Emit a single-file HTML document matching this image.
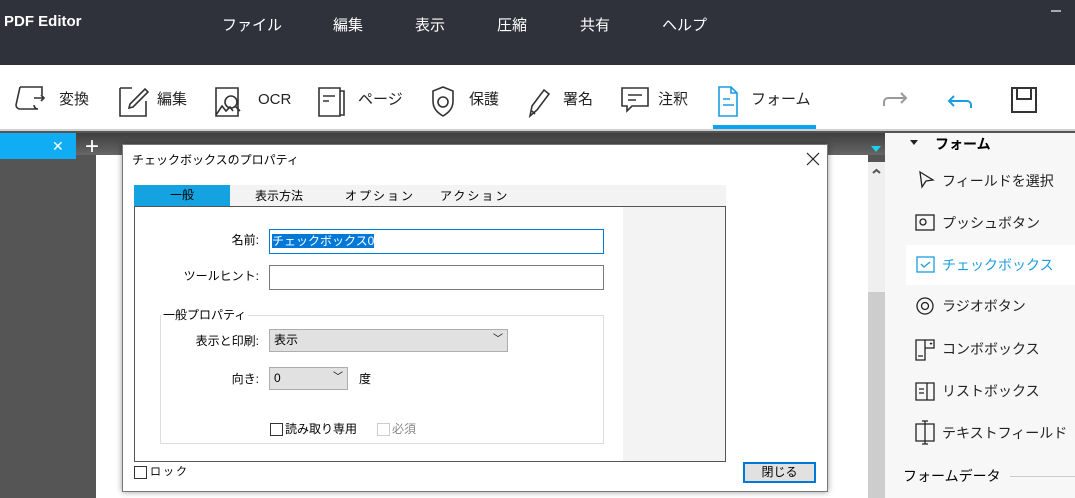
<!DOCTYPE html>
<html><head><meta charset="utf-8"><style>
*{margin:0;padding:0;box-sizing:border-box}
body{width:1075px;height:498px;overflow:hidden;position:relative;font-family:"Liberation Sans","Noto Sans CJK JP",sans-serif;background:#555}
.a{position:absolute}
.hdr{left:0;top:0;width:1075px;height:65px;background:#2f323b;color:#fff}
.menu{top:16px;font-size:15px;line-height:20px}
.tb{left:0;top:65px;width:1075px;height:66px;background:#fff;border-bottom:2px solid #d0d0d0}
.ti{top:90px;font-size:15px;line-height:20px;color:#222}
.dlg{left:122px;top:144px;width:706px;height:348px;background:#fff;border:1px solid #777;box-shadow:0 0 6px rgba(0,0,0,.4);font-size:12px;line-height:16px;color:#000}
.lbl{font-size:12px;text-align:right;width:120px}
.rp{left:885px;top:133px;width:190px;height:365px;background:#f7f7f7}
.ri{left:942px;font-size:14px;line-height:18px;color:#222}
</style></head><body>
<div class="a hdr">
<div class="a" style="left:4px;top:13px;font-weight:bold;font-size:15px;line-height:18px">PDF Editor</div>
<div class="a menu" style="left:222px">ファイル</div>
<div class="a menu" style="left:333px">編集</div>
<div class="a menu" style="left:415px">表示</div>
<div class="a menu" style="left:497px">圧縮</div>
<div class="a menu" style="left:580px">共有</div>
<div class="a menu" style="left:662px">ヘルプ</div>
<div class="a" style="left:1051px;top:10px;width:10px;height:2px;background:#aaa"></div>
</div>
<div class="a tb"></div>
<svg class="a" style="left:0;top:65px" width="1075" height="66" fill="none" stroke="#333" stroke-width="1.6">
<path d="M20 22h22v8M20 22l-4 18a4 4 0 0 0 4 4h18a4 4 0 0 1-4-4M34 33h10M41 30l3 3-3 3"/>
<path d="M120 23h12M120 23v28h26V36M133 42l-4 1 1-4 15-15 3 3z"/>
<path d="M216 23h22v28h-22zM216 50l6-9 4 5 4-4 3 4" /><circle cx="231" cy="37" r="6"/><path d="M235 41l5 5"/>
<path d="M319 23h21v28h-21zM340 26h4v24h-4M323 31h12M323 36h6"/>
<path d="M443 22l10 4v10c0 8-5 12-10 15-5-3-10-7-10-15V26z"/><circle cx="443" cy="37" r="5"/>
<path d="M530 51l2-10 12-16 5 4-12 16zM532 46l3 3"/>
<path d="M622 23h26v18h-16l-5 5v-5h-5zM628 30h14M628 35h8" />
<path stroke="#1a9de0" d="M719 22h12l6 6v23h-18zM731 22v6h6M723 34h7M723 40h11"/>
<path stroke="#999" stroke-width="2" d="M884 41v-4a4 4 0 0 1 4-4h18M901 28l5 5-5 5"/>
<path stroke="#1a9de0" stroke-width="2" d="M971 43v-3a4 4 0 0 0-4-4h-18M954 31l-5 5 5 5"/>
<path stroke-width="2" d="M1012 23h24v24h-24zM1017 23v11h14V23"/>
</svg>
<div class="a ti" style="left:59px">変換</div>
<div class="a ti" style="left:157px">編集</div>
<div class="a ti" style="left:258px">OCR</div>
<div class="a ti" style="left:358px">ページ</div>
<div class="a ti" style="left:469px">保護</div>
<div class="a ti" style="left:563px">署名</div>
<div class="a ti" style="left:658px">注釈</div>
<div class="a ti" style="left:751px">フォーム</div>
<div class="a" style="left:713px;top:125px;width:103px;height:4px;background:#0aa4f0"></div>
<div class="a" style="left:0;top:133px;width:885px;height:22px;background:linear-gradient(#3f3f3f,#666)"></div>
<div class="a" style="left:0;top:133px;width:76px;height:26px;background:#10adf5;color:#fff;font-size:14px;line-height:26px;padding-left:52px">✕</div>
<div class="a" style="left:85px;top:133px;color:#fff;font-size:24px;line-height:28px">+</div>
<div class="a" style="left:871px;top:146px;border:5px solid transparent;border-top:6px solid #19d4f0;border-bottom:0"></div>
<div class="a" style="left:96px;top:155px;width:772px;height:343px;background:#fff"></div>
<div class="a" style="left:868px;top:162px;width:17px;height:336px;background:#cdcdcd"></div>
<div class="a" style="left:868px;top:162px;width:17px;height:130px;background:#efefef"></div>
<svg class="a" style="left:868px;top:162px" width="17" height="20"><path d="M5 11l3.5-3 3.5 3" fill="none" stroke="#555" stroke-width="2"/></svg>
<div class="a rp"></div>
<div class="a" style="left:910px;top:140px;border:4px solid transparent;border-top:5px solid #222;border-bottom:0"></div>
<div class="a" style="left:935px;top:135px;font-size:14px;line-height:18px;font-weight:bold">フォーム</div>
<div class="a" style="left:906px;top:245px;width:169px;height:40px;background:#fff"></div>
<svg class="a" style="left:880px;top:160px" width="60" height="300" fill="none" stroke="#222" stroke-width="1.3">
<path d="M40 12l13 8-7 1-4 6z"/>
<rect x="36" y="55" width="18" height="15"/><circle cx="43" cy="62" r="3"/>
<rect x="37" y="97" width="17" height="15" stroke="#1a9de0"/><path stroke="#1a9de0" d="M41 104l3 3 6-5"/>
<circle cx="45" cy="146" r="8"/><circle cx="45" cy="146" r="3.5"/>
<path d="M36 180h9v20h-9zM45 180h9v8h-9M38 196h5M50 183l1 1 1-1"/>
<path d="M36 223h18v17H36zM47 223v17M39 229h5M39 233h5"/>
<path d="M36 264h18v17H36zM45 261v23M42 261h6M42 284h6"/>
</svg>
<div class="a ri" style="top:172px">フィールドを選択</div>
<div class="a ri" style="top:214px">プッシュボタン</div>
<div class="a ri" style="top:256px;color:#1a9de0">チェックボックス</div>
<div class="a ri" style="top:297px">ラジオボタン</div>
<div class="a ri" style="top:340px">コンボボックス</div>
<div class="a ri" style="top:382px">リストボックス</div>
<div class="a ri" style="top:424px">テキストフィールド</div>
<div class="a" style="left:903px;top:467px;font-size:14px;line-height:18px">フォームデータ</div>
<div class="a" style="left:1010px;top:476px;width:65px;height:1px;background:#ccc"></div>

<div class="a dlg">
<div class="a" style="left:9px;top:7px">チェックボックスのプロパティ</div>
<svg class="a" style="left:683px;top:7px" width="14" height="14"><path d="M1 1l12 12M13 1L1 13" stroke="#222" stroke-width="1.2"/></svg>
<div class="a" style="left:11px;top:40px;width:592px;height:22px;background:#f3f3f3"></div>
<div class="a" style="left:11px;top:40px;width:96px;height:22px;background:#14a3e0;text-align:center;line-height:20px">一般</div>
<div class="a" style="left:132px;top:43px">表示方法</div>
<div class="a" style="left:222px;top:43px;letter-spacing:2px">オプション</div>
<div class="a" style="left:317px;top:43px;letter-spacing:2px">アクション</div>
<div class="a" style="left:11px;top:61px;width:592px;height:256px;border:1px solid #555;background:#f3f3f3"></div>
<div class="a" style="left:12px;top:62px;width:488px;height:254px;background:#fff"></div>
<div class="a lbl" style="left:16px;top:87px">名前:</div>
<div class="a" style="left:146px;top:84px;width:335px;height:25px;border:1px solid #0078d7;padding:3px 2px"><span style="background:#0078d7;color:#fff">チェックボックス0</span></div>
<div class="a lbl" style="left:16px;top:123px">ツールヒント:</div>
<div class="a" style="left:146px;top:120px;width:335px;height:25px;border:1px solid #7a7a7a"></div>
<div class="a" style="left:37px;top:170px;width:444px;height:129px;border:1px solid #ddd"></div>
<div class="a" style="left:38px;top:162px;background:#fff;padding:0 2px">一般プロパティ</div>
<div class="a lbl" style="left:16px;top:188px">表示と印刷:</div>
<div class="a" style="left:146px;top:184px;width:239px;height:23px;border:1px solid #adadad;background:#e1e1e1;padding:2px 4px">表示<span style="float:right;font-size:10px">﹀</span></div>
<div class="a lbl" style="left:16px;top:226px">向き:</div>
<div class="a" style="left:146px;top:222px;width:79px;height:23px;border:1px solid #adadad;background:#e1e1e1;padding:2px 4px">0<span style="float:right;font-size:10px">﹀</span></div>
<div class="a" style="left:236px;top:226px">度</div>
<div class="a" style="left:147px;top:278px;width:13px;height:13px;border:1px solid #333"></div>
<div class="a" style="left:162px;top:276px">読み取り専用</div>
<div class="a" style="left:254px;top:278px;width:13px;height:13px;border:1px solid #ccc"></div>
<div class="a" style="left:269px;top:276px;color:#888">必須</div>
<div class="a" style="left:11px;top:321px;width:13px;height:13px;border:1px solid #333"></div>
<div class="a" style="left:27px;top:319px;font-size:11px;letter-spacing:2px">ロック</div>
<div class="a" style="left:620px;top:317px;width:73px;height:21px;border:2px solid #0078d7;background:#e1e1e1;text-align:center;line-height:17px">閉じる</div>
</div>
</body></html>
